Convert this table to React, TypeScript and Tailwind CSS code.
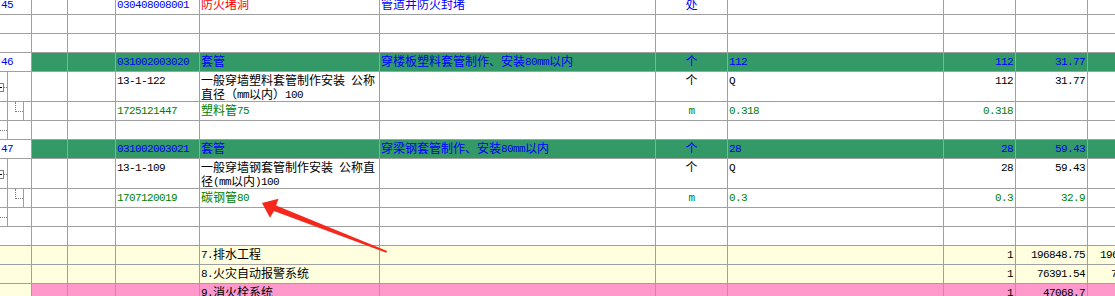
import React from 'react';

const LINE = 'border-[#a0a0a0]';

function Txt({ s }: { s: string }) {
  const parts = s.split(/([\x20-\x7e]+)/).filter((p) => p.length > 0);
  return (
    <>
      {parts.map((p, i) =>
        /^[\x20-\x7e]+$/.test(p) ? (
          <span
            key={i}
            className="relative top-[-1px] font-['Liberation_Mono',monospace] text-[11px] tracking-[-0.6px] whitespace-pre"
          >
            {p}
          </span>
        ) : (
          <span key={i}>{p}</span>
        )
      )}
    </>
  );
}

type Align = 'l' | 'r' | 'c';

function Cell({
  w,
  bg = '',
  color = '',
  align = 'l',
  pad,
  children,
}: {
  w: string;
  bg?: string;
  color?: string;
  align?: Align;
  pad?: string;
  children?: React.ReactNode;
}) {
  const al =
    pad ?? (align === 'r' ? 'text-right pr-[2px]' : align === 'c' ? 'text-center' : 'text-left pl-[1px]');
  return (
    <div
      className={`${w} shrink-0 border-r ${LINE} ${bg} ${color} ${al} pt-[2px] overflow-hidden whitespace-nowrap`}
    >
      {children}
    </div>
  );
}

type AKind = 'num' | 'parent' | 'child' | 'dots' | 'plain';

function ACell({ kind, text, bg = 'bg-white' }: { kind: AKind; text?: string; bg?: string }) {
  if (kind === 'num' || kind === 'plain') {
    return (
      <div className={`w-[32px] shrink-0 border-r ${LINE} ${bg} text-[#0000ff] pl-[1px] pt-[2px] whitespace-nowrap`}>
        {text ? <Txt s={text} /> : null}
      </div>
    );
  }
  if (kind === 'parent') {
    return (
      <div className={`w-[32px] shrink-0 flex border-r ${LINE} bg-white`}>
        <div className={`w-[8px] shrink-0 border-r ${LINE} flex items-center pt-[2px]`}>
          <div className="-ml-[5px] w-[9px] h-[9px] shrink-0 border border-[#808080] bg-white flex items-center justify-center">
            <div className="w-[5px] h-px bg-black" />
          </div>
          <div className="w-[3px] shrink-0 border-t border-dotted border-[#808080]" />
        </div>
        <div className="flex-1" />
      </div>
    );
  }
  if (kind === 'child') {
    return (
      <div className={`w-[32px] shrink-0 flex border-r ${LINE} bg-white`}>
        <div className={`w-[8px] shrink-0 border-r ${LINE}`} />
        <div className={`w-[16px] shrink-0 border-r ${LINE}`}>
          <div className="ml-[7px] w-[8px] h-[10px] border-l border-b border-dotted border-[#808080]" />
        </div>
        <div className="flex-1" />
      </div>
    );
  }
  return (
    <div className={`w-[32px] shrink-0 flex border-r ${LINE} bg-white`}>
      <div className={`w-[8px] shrink-0 border-r ${LINE} pt-[9px]`}>
        <div className="w-[7px] border-t border-dotted border-[#808080]" />
      </div>
      <div className="flex-1" />
    </div>
  );
}

type RowDef = {
  double?: boolean;
  a: AKind;
  aText?: string;
  aBg?: string;
  bg: string;
  color: string;
  d?: string;
  e?: string[];
  eColor?: string;
  f?: string;
  g?: string;
  h?: string;
  i?: string;
  j?: string;
  k?: string;
  kPad?: string;
};

const BLUE = 'text-[#0000ff]';
const GREEN = 'text-[#008000]';
const BLACK = 'text-black';
const GBG = 'bg-[#339966]';
const YBG = 'bg-[#ffffe0]';
const PBG = 'bg-[#ff99cc]';

const rows: RowDef[] = [
  {
    a: 'num',
    aText: '45',
    bg: 'bg-white',
    color: BLUE,
    d: '030408008001',
    e: ['防火堵洞'],
    eColor: 'text-[#ff0000]',
    f: '管道井防火封堵',
    g: '处',
  },
  { a: 'plain', bg: 'bg-white', color: BLACK },
  { a: 'plain', bg: 'bg-white', color: BLACK },
  {
    a: 'num',
    aText: '46',
    bg: GBG,
    color: BLUE,
    d: '031002003020',
    e: ['套管'],
    f: '穿楼板塑料套管制作、安装80mm以内',
    g: '个',
    h: '112',
    i: '112',
    j: '31.77',
  },
  {
    double: true,
    a: 'parent',
    bg: 'bg-white',
    color: BLACK,
    d: '13-1-122',
    e: ['一般穿墙塑料套管制作安装 公称', '直径（mm以内）100'],
    g: '个',
    h: 'Q',
    i: '112',
    j: '31.77',
  },
  {
    a: 'child',
    bg: 'bg-white',
    color: GREEN,
    d: '1725121447',
    e: ['塑料管75'],
    g: 'm',
    h: '0.318',
    i: '0.318',
  },
  { a: 'dots', bg: 'bg-white', color: BLACK },
  {
    a: 'num',
    aText: '47',
    bg: GBG,
    color: BLUE,
    d: '031002003021',
    e: ['套管'],
    f: '穿梁钢套管制作、安装80mm以内',
    g: '个',
    h: '28',
    i: '28',
    j: '59.43',
  },
  {
    double: true,
    a: 'parent',
    bg: 'bg-white',
    color: BLACK,
    d: '13-1-109',
    e: ['一般穿墙钢套管制作安装 公称直', '径(mm以内)100'],
    g: '个',
    h: 'Q',
    i: '28',
    j: '59.43',
  },
  {
    a: 'child',
    bg: 'bg-white',
    color: GREEN,
    d: '1707120019',
    e: ['碳钢管80'],
    g: 'm',
    h: '0.3',
    i: '0.3',
    j: '32.9',
  },
  { a: 'dots', bg: 'bg-white', color: BLACK },
  { a: 'plain', bg: 'bg-white', color: BLACK },
  {
    a: 'plain',
    aBg: YBG,
    bg: YBG,
    color: BLACK,
    e: ['7.排水工程'],
    i: '1',
    j: '196848.75',
    k: '196848.75',
    kPad: 'text-left pl-[12px]',
  },
  {
    a: 'plain',
    aBg: YBG,
    bg: YBG,
    color: BLACK,
    e: ['8.火灾自动报警系统'],
    i: '1',
    j: '76391.54',
    k: '76391.54',
    kPad: 'text-left pl-[23px]',
  },
  {
    a: 'plain',
    aBg: YBG,
    bg: PBG,
    color: BLACK,
    e: ['9.消火栓系统'],
    i: '1',
    j: '47068.7',
  },
];

function Row({ r }: { r: RowDef }) {
  const h = r.double ? 'h-[30px]' : 'h-[19px]';
  return (
    <div className={`flex w-max ${h} border-b ${LINE}`}>
      <ACell kind={r.a} text={r.aText} bg={r.aBg ?? 'bg-white'} />
      <Cell w="w-[36px]" bg={r.bg} />
      <Cell w="w-[48px]" bg={r.bg} />
      <Cell w="w-[84px]" bg={r.bg} color={r.color}>
        {r.d ? <Txt s={r.d} /> : null}
      </Cell>
      <Cell w="w-[180px]" bg={r.bg} color={r.eColor ?? r.color}>
        {r.e?.map((line, idx) => (
          <div key={idx}>
            <Txt s={line} />
          </div>
        ))}
      </Cell>
      <Cell w="w-[276px]" bg={r.bg} color={r.color}>
        {r.f ? <Txt s={r.f} /> : null}
      </Cell>
      <Cell w="w-[72px]" bg={r.bg} color={r.color} align="c">
        {r.g ? <Txt s={r.g} /> : null}
      </Cell>
      <Cell w="w-[216px]" bg={r.bg} color={r.color}>
        {r.h ? <Txt s={r.h} /> : null}
      </Cell>
      <Cell w="w-[72px]" bg={r.bg} color={r.color} align="r">
        {r.i ? <Txt s={r.i} /> : null}
      </Cell>
      <Cell w="w-[72px]" bg={r.bg} color={r.color} align="r">
        {r.j ? <Txt s={r.j} /> : null}
      </Cell>
      <Cell w="w-[72px]" bg={r.bg} color={r.color} pad={r.kPad ?? 'text-left'}>
        {r.k ? <Txt s={r.k} /> : null}
      </Cell>
    </div>
  );
}

export default function App() {
  return (
    <div className="relative w-[1115px] h-[296px] overflow-hidden bg-white font-['Noto_Sans_CJK_SC',sans-serif] text-[12px] leading-[12px]">
      <div className="-mt-[4px] flex flex-col">
        {rows.map((r, idx) => (
          <Row key={idx} r={r} />
        ))}
      </div>
      <svg
        className="absolute left-0 top-0 pointer-events-none"
        width={1115}
        height={296}
        viewBox="0 0 1115 296"
      >
        <polygon
          points="262,203 278.5,198.8 276.1,205.4 387.1,251 386.3,252.8 273.9,211 270,217.8"
          fill="#f5281e"
        />
      </svg>
    </div>
  );
}
